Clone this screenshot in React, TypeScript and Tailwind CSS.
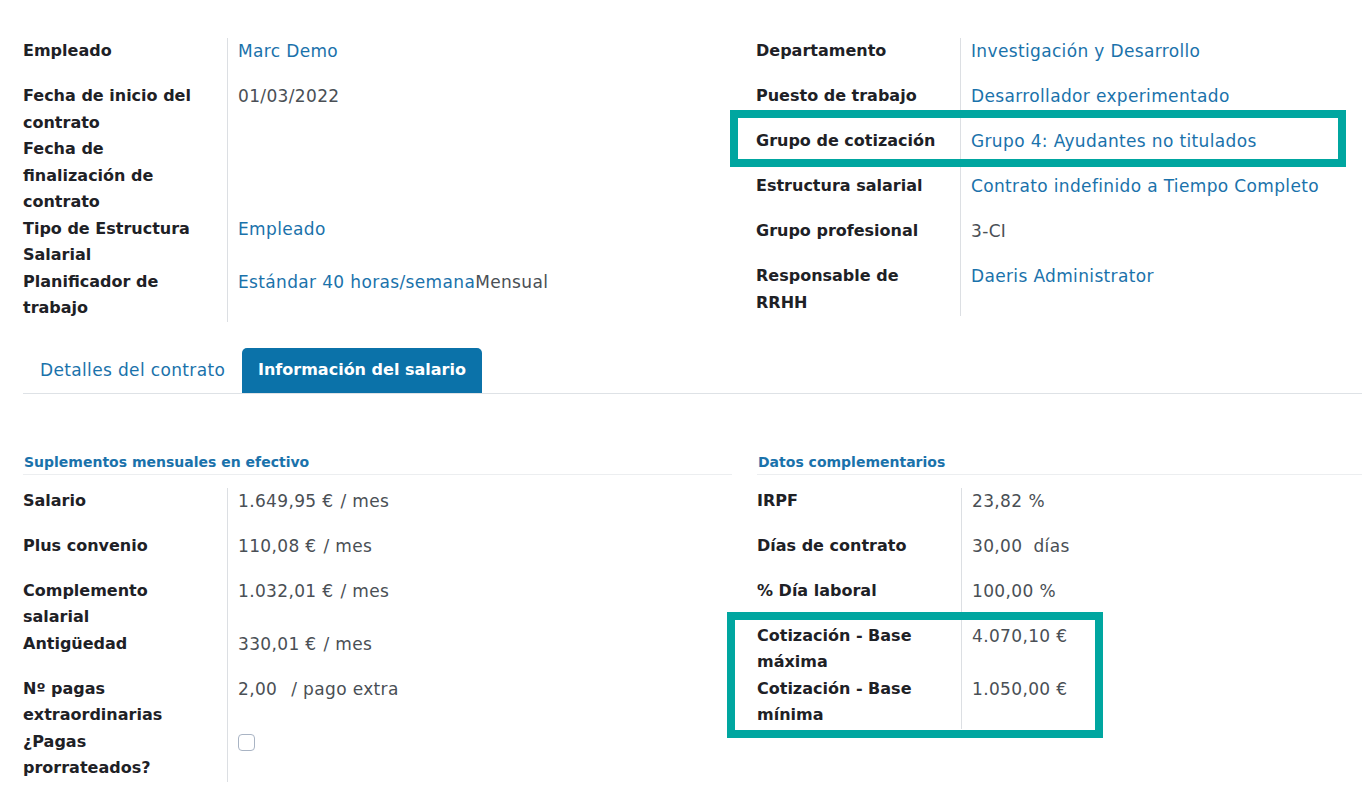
import { ReactNode } from "react";

type Row = { label: string[]; value: ReactNode };

const linkCls = "text-[#1a72ab]";
const valCls = "text-[#4a4f55]";

function Link({ children }: { children: ReactNode }) {
  return <span className={linkCls}>{children}</span>;
}

function Unit({ amount, unit, gap = "ml-[7px]" }: { amount: string; unit: string; gap?: string }) {
  return (
    <span className={valCls}>
      {amount}
      <span className={gap}>{unit}</span>
    </span>
  );
}

function FieldRows({ rows }: { rows: Row[] }) {
  return (
    <div className="flex flex-col">
      {rows.map((r) => (
        <div key={r.label.join(" ")} className="flex min-h-[45px]">
          <div className="w-[204px] shrink-0 whitespace-nowrap font-bold text-[#1e2126]">
            {r.label.map((l) => (
              <div key={l}>{l}</div>
            ))}
          </div>
          <div className="flex-1 whitespace-nowrap border-l border-[#dcdfe3] pl-[10px] text-[17px] tracking-[0.35px]">
            {r.value}
          </div>
        </div>
      ))}
    </div>
  );
}

function SectionTitle({ children }: { children: ReactNode }) {
  return (
    <div className="h-[26px] border-b border-[#eceef0] pl-px text-[14px] font-bold leading-[26px] text-[#1a72ab]">
      {children}
    </div>
  );
}

export default function App() {
  const topLeft: Row[] = [
    { label: ["Empleado"], value: <Link>Marc Demo</Link> },
    { label: ["Fecha de inicio del", "contrato"], value: <span className={valCls}>01/03/2022</span> },
    { label: ["Fecha de", "finalización de", "contrato"], value: null },
    { label: ["Tipo de Estructura", "Salarial"], value: <Link>Empleado</Link> },
    {
      label: ["Planificador de", "trabajo"],
      value: (
        <span>
          <Link>Estándar 40 horas/semana</Link>
          <span className={valCls}>Mensual</span>
        </span>
      ),
    },
  ];

  const topRight: Row[] = [
    { label: ["Departamento"], value: <Link>Investigación y Desarrollo</Link> },
    { label: ["Puesto de trabajo"], value: <Link>Desarrollador experimentado</Link> },
    { label: ["Grupo de cotización"], value: <Link>Grupo 4: Ayudantes no titulados</Link> },
    { label: ["Estructura salarial"], value: <Link>Contrato indefinido a Tiempo Completo</Link> },
    { label: ["Grupo profesional"], value: <span className={valCls}>3-CI</span> },
    { label: ["Responsable de", "RRHH"], value: <Link>Daeris Administrator</Link> },
  ];

  const salaryLeft: Row[] = [
    { label: ["Salario"], value: <Unit amount="1.649,95 €" unit="/ mes" /> },
    { label: ["Plus convenio"], value: <Unit amount="110,08 €" unit="/ mes" /> },
    { label: ["Complemento", "salarial"], value: <Unit amount="1.032,01 €" unit="/ mes" /> },
    { label: ["Antigüedad"], value: <Unit amount="330,01 €" unit="/ mes" /> },
    { label: ["Nº pagas", "extraordinarias"], value: <Unit amount="2,00" unit="/ pago extra" gap="ml-[14px]" /> },
    {
      label: ["¿Pagas", "prorrateados?"],
      value: <span className="mt-[5px] block h-[17px] w-[17px] rounded-[4px] border border-[#a9b4c4] bg-white" />,
    },
  ];

  const salaryRight: Row[] = [
    { label: ["IRPF"], value: <Unit amount="23,82" unit="%" gap="ml-[6px]" /> },
    { label: ["Días de contrato"], value: <Unit amount="30,00" unit="días" gap="ml-[11px]" /> },
    { label: ["% Día laboral"], value: <Unit amount="100,00" unit="%" gap="ml-[6px]" /> },
    { label: ["Cotización - Base", "máxima"], value: <span className={valCls}>4.070,10 €</span> },
    { label: ["Cotización - Base", "mínima"], value: <span className={valCls}>1.050,00 €</span> },
  ];

  return (
    <div className="relative min-h-screen w-[1362px] overflow-hidden bg-white pl-[23px] pt-[38px] font-['DejaVu_Sans','Open_Sans',sans-serif] text-[16px] leading-[26.5px]">
      {/* header fields */}
      <div className="flex">
        <div className="w-[709px] shrink-0">
          <FieldRows rows={topLeft} />
        </div>
        <div className="ml-[24px] flex-1">
          <FieldRows rows={topRight} />
        </div>
      </div>

      {/* tabs */}
      <div className="mt-[26px] flex h-[46px] items-end border-b border-[#dee2e6]">
        <div className="flex h-[45px] w-[219px] items-center pl-[17px] text-[17px] tracking-[0.35px] text-[#1a72ab]">
          Detalles del contrato
        </div>
        <div className="flex h-[45px] items-center rounded-t-[5px] bg-[#0b72a9] px-[16px] font-bold text-white">
          Información del salario
        </div>
      </div>

      {/* salary info */}
      <div className="mt-[55px] flex">
        <div className="w-[709px] shrink-0">
          <SectionTitle>Suplementos mensuales en efectivo</SectionTitle>
          <div className="mt-[13px]">
            <FieldRows rows={salaryLeft} />
          </div>
        </div>
        <div className="ml-[25px] flex-1">
          <SectionTitle>Datos complementarios</SectionTitle>
          <div className="mt-[13px]">
            <FieldRows rows={salaryRight} />
          </div>
        </div>
      </div>

      {/* highlight annotations */}
      <div className="pointer-events-none absolute left-[730px] top-[110px] h-[57px] w-[616px] border-[8px] border-[#00a6a0]" />
      <div className="pointer-events-none absolute left-[727px] top-[612px] h-[126px] w-[376px] border-[8px] border-[#00a6a0]" />
    </div>
  );
}
